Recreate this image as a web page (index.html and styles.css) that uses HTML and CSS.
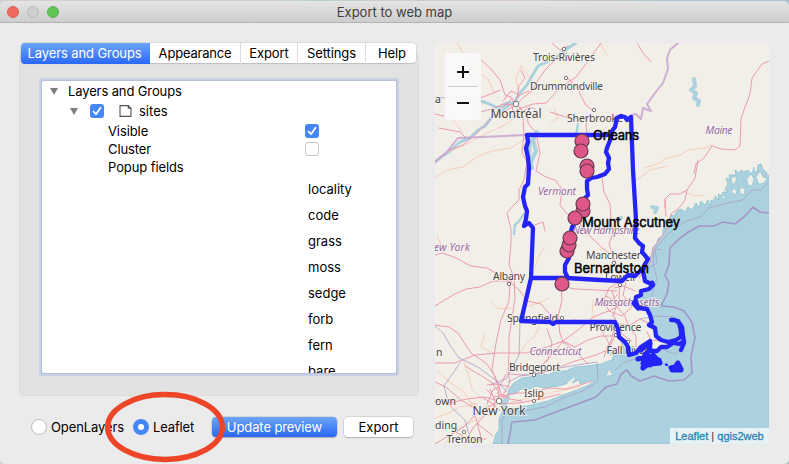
FILE: index.html
```html
<!DOCTYPE html>
<html lang="en">
<head>
<meta charset="utf-8">
<title>Export to web map</title>
<link rel="stylesheet" href="styles.css">
</head>
<body>
<div class="window">
  <header class="titlebar">
    <div class="lights"><i class="close"></i><i class="min"></i><i class="max"></i></div>
    <h1>Export to web map</h1>
  </header>
  <main class="content">
    <section class="left">
      <nav class="tabs">
        <span class="tab active">Layers and Groups</span>
        <span class="tab">Appearance</span>
        <span class="tab">Export</span>
        <span class="tab">Settings</span>
        <span class="tab help">Help</span>
      </nav>
      <div class="panel">
        <div class="tree">
          <div class="row root"><i class="arrow"></i><span>Layers and Groups</span></div>
          <div class="row layer"><i class="arrow"></i>
            <svg class="check" viewBox="0 0 14 14"><rect width="14" height="14" rx="3" fill="#4787f5"/><path d="M3.5 7.5 6 10.2 10.6 3.8" fill="none" stroke="#fff" stroke-width="1.8" stroke-linecap="round" stroke-linejoin="round"/></svg>
            <svg class="page" viewBox="0 0 13 12"><path d="M1 .6H9.300L12 3.300V11.400H1ZM9.300 .6V3.300H12" fill="#fff" stroke="#555" stroke-width="1.1"/></svg>
            <span>sites</span></div>
          <div class="row prop"><span>Visible</span>
            <svg class="check" viewBox="0 0 14 14"><rect width="14" height="14" rx="3" fill="#4787f5"/><path d="M3.5 7.5 6 10.2 10.6 3.8" fill="none" stroke="#fff" stroke-width="1.8" stroke-linecap="round" stroke-linejoin="round"/></svg></div>
          <div class="row prop"><span>Cluster</span><i class="box"></i></div>
          <div class="row prop"><span>Popup fields</span></div>
          <ul class="fields">
            <li>locality</li><li>code</li><li>grass</li><li>moss</li><li>sedge</li><li>forb</li><li>fern</li><li>bare</li>
          </ul>
        </div>
      </div>
      <footer class="actions">
        <span class="radio"></span><label class="open">OpenLayers</label>
        <span class="radio on"></span><label class="leaf">Leaflet</label>
        <button class="btn primary">Update preview</button>
        <button class="btn">Export</button>
        <svg class="ring" viewBox="0 0 124 74"><ellipse cx="62" cy="37" rx="57.3" ry="32.4" fill="none" stroke="#ee4528" stroke-width="5.5"/></svg>
      </footer>
    </section>
    <section class="map">
      <svg class="tiles" viewBox="435 43 334 401">
        <rect x="435" y="43" width="334" height="401" fill="#f2efe9"/>
        <path class="sea" d="M769 176 765 171 763 169 761 164 758 165 757 172 753 171 751 174 748 170 744 172 741 170 739 173 735 170 736 175 729 175 730 180 726 178 728 184 725 189 728 192 723 192 721 196 718 194 719 200 715 196 716 202 711 200 710 206 708 200 705 205 701 201 699 208 696 203 692 210 688 207 685 212 681 209 677 211 674 216 671 215 669 221 666 220 666 227 663 229 663 235 658 239 656 245 653 247 652 254 648 260 647 267 644 271 646 281 653 283 651 288 642 292 636 297 635 305 646 309 651 318 650 325 655 331 657 338 668 341 680 337 678 325 671 321 681 323 684 340 680 346 664 347 654 352 650 343 641 351 634 355 629 349 625 350 622 342 620 355 614 354 612 360 601 364 587 366 575 367 566 371 556 371 548 375 539 373 530 377 522 378 514 383 509 389 508 394 515 394 521 389 530 389 536 386 544 388 558 386 566 384 570 379 574 375 576 378 572 383 579 380 580 384 588 381 595 380 589 385 577 390 560 396 548 401 532 405 516 408 504 409 501 414 499 420 499 430 496 434 493 444H769Z"/>
        <path d="M575 369 568 379 561 382 570 381 577 375ZM509 393 499 404 504 409 510 399Z" fill="#acd2df"/>
        <g class="river">
          <path d="M576 43 568 48 558 56 547 62 538 66 532 76 527 85 520 93 515 101 506 107 501 112 492 117 485 126 478 130 470 138 460 142 449 152 441 157 435 162M515 103 507 103 498 108 487 103 480 101" stroke-width="3"/>
          <path d="M537 132 533 140 536 151 532 160 527 169M530 140 529 155 532 168" stroke-width="4"/>
          <path d="M524 214 519 221 515 225 514 234M578 124 576 135" stroke-width="2.500"/>
          <path d="M694 79 695 86 691 90 696 93 694 98 699 101 698 105M652 207 657 208 655 212M616 220 621 218" stroke-width="4"/>
          <path d="M767 175 761 183 764 188 757 188 760 194 751 184 749 178 742 180 744 189 735 185 737 194 731 193 739 198 732 202M754 168 751 180 746 175 740 185M714 199 711 210 703 207 701 213 693 209 690 219 683 212 679 222 673 218 672 227" stroke-width="2"/>
        </g>
        <g class="islands"><path d="m756 177 4-6 3 6 4 1-3 5-5 1ZM747 179l4-5 3 5-2 7-4-1ZM740 188l5 0-1 7-4-2ZM731 178l5-2 0 5-3 4ZM733 188l4 3-2 4-3-3ZM722 196l3-1-1 5ZM606 376l3-7 4 6ZM610 355l2-7 2 5Z"/></g>
        <g class="minor">
          <path d="M457 43 463 53 471 58 476 71 488 79 494 92M435 161 450 151 469 143 485 134 505 125 521 113M435 178 447 170 463 167 477 157 492 151 511 148 525 139M453 120 463 133M519 95 516 77 521 66 531 79M585 134 600 133 606 127M644 168 660 163 666 158 680 155 688 150 705 148 712 145M554 108 558 118 551 123M635 181 650 170 668 166M682 191 695 196 704 195M600 43 607 55M535 268 539 256 544 248M529 306 541 302 549 298M438 371 451 383 464 392 472 406 490 416M464 362 469 377 472 389 480 397M435 418 447 414 460 407 477 404M445 444 455 430 470 423 490 412M469 401 482 408 496 405M512 402 533 397 558 391 580 387M485 333 481 347 495 354M593 300 592 316 602 331M541 321 535 336 525 345 518 356M437 236 443 249M491 303 499 309 511 308"/>
        </g>
        <g class="road">
          <path d="M552 43 560 50 568 46M563 50 561 56 553 62 545 70 538 80 532 91 524 97 517 104 507 110 493 117 478 132 463 145 446 152 435 162M601 43 588 61 576 77 561 87 546 103 533 104 516 110M567 77 578 89 585 104 593 111M588 116 586 125 587 133M516 105 503 104 492 109 480 112M516 105 511 97 505 95 500 80 491 69 481 60M516 105 519 86 525 78 521 70M500 109 508 103 512 98M503 101 511 91 520 95 529 91M516 105 524 111 529 107 535 109M480 98 491 94 500 90M512 106 514 116 523 117M520 107 523 119 524 135 522 153 527 162 524 180 519 190 519 200 513 206 507 213 511 229 511 243 509 265 513 275M527 112 528 123 536 133 540 153 536 171 546 177 555 180 562 189 560 205 567 214 574 216M550 112 569 118 586 119M435 114 444 116M439 128 460 132 466 138"/>
          <path d="M637 43 643 53 651 62M769 61 762 64 752 78 750 94 744 110 741 119 740 146 735 150 721 149 712 146 704 158 696 164 694 173M698 160 695 178 687 190 685 200 679 208 671 214 665 232 653 248 650 263 639 278M665 208 665 199 670 194 680 194 687 190M665 200 666 216M602 178 604 192 610 204 611 220 613 233 609 244 615 261 620 276 619 300 613 315M578 220 584 231 593 239 602 248 612 255M532 226 543 222 545 231M513 275 510 285 501 276 487 268 471 266 454 257 442 253 435 255M435 306 453 295 466 289 480 287 493 281 509 281 520 291 527 301 541 304 552 317 565 322M561 283 562 300 558 317 560 334 564 344M561 286 575 289 597 290 617 291M510 284 509 301 501 320 497 338 494 355 492 370 498 385 499 400M514 278 515 299 512 318 509 337 509 354 508 371 510 382 502 397M435 363 455 363 475 355 498 353 526 353 547 347 563 341 578 330 593 317 611 310 625 303 636 304M435 325 449 327 458 333 471 353 486 363 495 376 502 396M435 401 450 403 467 399 484 397 500 401M435 382 446 387 461 400 474 408 481 414M435 444 450 435 464 427 475 415 488 407 501 400M464 444 473 428 484 416 496 406M474 413 478 424 493 436M497 390 491 382 480 375 465 366M500 400 507 395 516 393 532 393 549 388 566 389 580 385 592 381M500 404 519 403 540 399 560 394M508 374 524 375 541 373 557 368 575 361 593 356 608 350 615 336 615 322M563 341 553 354 543 364 533 375M565 342 575 347 588 340 601 336 615 336M564 342 578 354 588 364M575 320 590 322 601 330 609 343 604 357M547 329 552 343 548 360 537 369"/>
          <path d="M619 282 609 288 604 300 609 311 622 316 633 306M614 288 624 286 635 291M606 296 616 302 627 299 636 304M612 291 617 307 625 316M626 282 623 295 631 306M600 304 609 304 618 294M613 315 618 324 630 325 640 319 648 323M615 324 612 338 608 350M625 316 629 327 636 336 636 347M647 332 651 340 668 341 679 337M615 326 623 335 632 341M487 385 498 384 510 387M487 390 494 397 507 395M487 404 493 390 500 386 506 374M481 397 492 403 500 411M493 410 495 401 490 389M497 393 510 399 522 401M477 423 481 437 477 444M456 432 469 440 486 439"/>
        </g>
        <g class="boundary">
          <path d="M678 43 670 50 667 58 668 69 663 83 655 93 647 104 651 111 648 110 643 108 641 119 636 114 632 115M435 162 446 153 458 138 526 135" stroke-width="2"/>
          <path d="M769 213 760 212 753 207 744 217 735 224 723 222 714 226 699 226 687 233 679 239 670 248 669 264 665 275 669 283 667 294 661 306 674 307 684 311 692 322 695 338 691 356 692 373 684 380 669 381 654 376 640 381 631 376 627 370 621 374 617 384 606 387 596 397 575 405 553 413 535 420 512 422 508 444" stroke="#a08cc4" stroke-width="1.600"/>
          <path d="M520 323 519 355 506 379 492 384M435 326 443 333 451 347 459 358 478 367 498 382 507 392M460 363 444 386 449 405 465 420 470 438M435 97 449 98 478 98M508 382 520 376 535 374 553 369 577 365 597 362 598 381 585 390 563 398 545 407 523 411 507 411 502 420 502 444M769 182 761 190 752 190 743 200 728 203 709 208 700 217 684 222 669 233 654 250 653 265 657 278 650 303M640 319 656 316 674 317M615 370 625 362 639 358 649 365M664 350 675 354 680 350M647 269 657 263 655 249 661 250" stroke="#a99cca"/>
        </g>
        <g class="places" text-anchor="middle">
          <g fill="#fff" stroke="#777"><circle cx="564" cy="49" r="1.700"/><circle cx="566" cy="78" r="1.700"/><circle cx="594" cy="110" r="1.700"/><circle cx="516" cy="104" r="2.700"/><circle cx="509" cy="284" r="1.700"/><circle cx="614" cy="263" r="1.700"/><circle cx="620" cy="285" r="1.700"/><circle cx="562" cy="318" r="1.700"/><circle cx="616" cy="335" r="1.700"/><circle cx="628" cy="342" r="1.700"/><circle cx="534" cy="375" r="1.700"/><circle cx="534" cy="401" r="1.700"/><circle cx="499" cy="401" r="2.700"/><circle cx="464" cy="432" r="1.700"/></g>
          <text x="564" y="61" textLength="62">Trois-Rivières</text>
          <text x="566.5" y="90" textLength="73">Drummondville</text>
          <text x="516" y="118" textLength="51" class="city">Montréal</text>
          <text x="595" y="121.500" textLength="56">Sherbrooke</text>
          <text x="438" y="102.500">a</text>
          <text x="509" y="280" textLength="32">Albany</text>
          <text x="613.500" y="259" textLength="55">Manchester</text>
          <text x="620" y="281" textLength="30">Lowell</text>
          <text x="532.500" y="321.500" textLength="51">Springfield</text>
          <text x="615.500" y="331" textLength="52">Providence</text>
          <text x="627.500" y="353.500" textLength="42">Fall River</text>
          <text x="534.500" y="371" textLength="51">Bridgeport</text>
          <text x="534" y="397" textLength="20">Islip</text>
          <text x="499" y="414.500" textLength="53" class="city">New York</text>
          <text x="464.500" y="443" textLength="36">Trenton</text>
          <text x="436" y="356" text-anchor="start">n</text>
          <text x="435" y="405" text-anchor="start">own</text>
          <text x="435" y="429" text-anchor="start">ding</text>
          <g class="state"><text x="719" y="134" textLength="27">Maine</text><text x="557" y="195" textLength="38">Vermont</text><text x="452" y="251" textLength="36">ew York</text><text x="606" y="234" textLength="67">New Hampshire</text><text x="627" y="306" textLength="65">Massachusetts</text><text x="555.500" y="354.500" textLength="52">Connecticut</text></g>
        </g>
        <g class="outline">
          <path d="M631 117 627 120 625 117 621 116 617 118 615 127 612 131 611 138 607 148 606 152 609 158 608 163 609 169 605 174 597 177 591 178 587 181 587 189 588 195 584 199 582 210 578 219 572 227 570 237 569 258 565 265 565 272 568 278M607 135 527 135 528 142 526 148 528 158 529 168 528 184 525 187 523 197 525 206 527 211 526 219 524 226 529 223 533 228 531 278 525 304 521 321 550 322 553 324 556 322 615 322 618 329 619 337 625 342 628 347 629 355 636 353 641 347 650 341 650 350 645 355 652 357 653 362M531 278 567 278 600 280 622 281 628 275 635 276 642 269M631 117 633 170 636 220 635 238 639 243 643 246 642 252 648 259 645 264 643 271 645 281 653 285 649 289 641 291 641 295 636 297 635 305 639 308 647 309 650 315 652 322 649 325 655 328 656 336 661 340 668 342 676 340 681 337 681 331 679 323 675 320 671 320M678 321 682 327 684 343 681 350M684 341 679 344 673 343 667 347 661 347 657 351 651 351"/>
          <path d="m634 303 4 5-2-5M652 283l0 2M650 325l1 0M641 350l5-5 4-2-1 8M638 359l7-2 5 3-3 5-4 3M643 363l7 2 9-5 1 3-9 1M645 354l-2 14M653 355l6 7M671 368l4-1 3-4 3 6-9 1 9 0" stroke-width="5"/>
          <path d="M666 364.500 667 365M670 367 671 367" stroke-width="2.500"/>
        </g>
        <g class="sites"><circle cx="583" cy="211" r="7"/><circle cx="582" cy="141" r="7"/><circle cx="581" cy="151" r="7"/><circle cx="587" cy="166" r="7"/><circle cx="587" cy="171" r="7"/><circle cx="583" cy="204" r="7"/><circle cx="575" cy="218" r="7"/><circle cx="567" cy="251" r="7"/><circle cx="569" cy="245" r="7"/><circle cx="570" cy="238" r="7"/><circle cx="562" cy="284" r="7"/></g>
        <g class="labels"><text x="593" y="140" textLength="46">Orleans</text><text x="582" y="227" textLength="98">Mount Ascutney</text><text x="574" y="273" textLength="75">Bernardston</text></g>
      </svg>
      <div class="zoom"><b class="plus"></b><b></b></div>
      <div class="credit"><a>Leaflet</a> | <a>qgis2web</a></div>
    </section>
  </main>
</div>
</body>
</html>
```

FILE: styles.css
```css
* { box-sizing: border-box; }
body { margin: 0; background: linear-gradient(90deg, #d5d0cb 0 28%, #b9cfd3 40%, #d8c9c6 65%, #a9c4ce 85%); font: 13px/18px Inter, "Liberation Sans", sans-serif; color: #000; overflow: hidden; }
.window { height: 463px; margin-top: 1px; background: #ebebeb; border-radius: 6px 6px 5px 5px; overflow: hidden; }
.titlebar { display: flex; align-items: center; height: 22px; padding-left: 7px; background: linear-gradient(#e4e4e4, #cdcdcd); border-bottom: 1px solid #b3b3b3; }
.lights { display: flex; gap: 8px; width: 52px; }
.lights i { width: 12px; height: 12px; border-radius: 50%; background: #ee6a5f; border: 1px solid #de5c51; }
.lights .min { background: #d0d0d0; border-color: #b9b9b9; }
.lights .max { background: #61c554; border-color: #58b34b; }
.titlebar h1 { flex: 1; margin: 0 59px 0 0; font-size: 13px; font-weight: 400; text-align: center; color: #404040; }
.content { display: flex; gap: 16px; padding: 20px 20px 0 19px; }
.left { width: 400px; }
.tabs { position: relative; display: grid; grid-template-columns: 129px 91px 57px 68px 49px; height: 20px; width: 395px; margin: 0 0 -10px 2px; background: #fff; border-radius: 4px; box-shadow: 0 0 0 .5px #c8c8c8, 0 1px 1px #b5b5b5; z-index: 1; }
.tab { text-align: center; line-height: 21px; border-right: 1px solid #ddd; white-space: nowrap; letter-spacing: -.1px; }
.tab:nth-child(2) { letter-spacing: -.2px; }
.tab.active { color: #fff; border: 0; padding-right: 2px; background: linear-gradient(#6da5f9, #2968f6); border-radius: 4px 0 0 4px; }
.tab.help { border: 0; padding-left: 3px; }
.panel { height: 343px; padding: 27px 0 0 22px; background: #e2e2e2; border: 1px solid #dcdcdc; border-radius: 4px; }
.tree { width: 354px; height: 292px; overflow: hidden; background: #fff; outline: 1px solid #b4c1d7; box-shadow: 0 0 0 3px #c7d1e3; border-radius: 1px; }
.row { display: flex; align-items: center; height: 18px; }
.arrow { width: 0; height: 0; border: 4.5px solid transparent; border-top: 7px solid #7d7d7d; border-bottom: 0; }
.root { padding-left: 8px; height: 20px; gap: 10px; letter-spacing: -.12px; }
.layer { padding-left: 28px; height: 20px; }
.check { width: 14px; height: 14px; }
.layer .check { margin-left: 12px; }
.page { width: 13px; height: 12px; margin: 0 7px 0 15px; }
.prop { position: relative; top: 1px; padding-left: 66px; letter-spacing: -.1px; }
.prop span { width: 197px; }
.box { width: 14px; height: 14px; border: 1px solid #c4c4c4; border-radius: 3px; background: #fff; }
.fields { list-style: none; margin: 1px 0 0; padding: 0 0 0 266px; }
.fields li { height: 26px; line-height: 26px; }
.actions { position: relative; display: flex; align-items: center; height: 22px; margin-top: 20px; padding-left: 12px; }
.radio { width: 16px; height: 16px; border: 1px solid #bdbdbd; border-radius: 50%; background: #fff; }
.radio.on { border: 5px solid #4787f5; }
.open { width: 82px; margin-left: 4px; letter-spacing: -.1px; }
.leaf { width: 59px; margin-left: 4px; letter-spacing: -.15px; }
.btn { position: relative; top: -.5px; font: inherit; width: 69px; height: 20px; margin-left: 7px; padding: 0; border: 0; border-radius: 4px; background: #fff; box-shadow: 0 0 0 .5px #c0c0c0, 0 1px 1px #aaa; white-space: nowrap; }
.primary { width: 125px; margin-left: 0; color: #fff; background: linear-gradient(#6da5f9, #2968f6); letter-spacing: -.1px; }
.ring { position: absolute; left: 84px; top: -26px; width: 124px; height: 74px; }
.map { position: relative; width: 334px; height: 401px; overflow: hidden; }
.tiles { display: block; width: 334px; height: 401px; }
.tiles path { fill: none; stroke-linejoin: round; stroke-linecap: round; }
.tiles .sea { fill: #acd2df; stroke: #8cc2d1; stroke-width: .8; }
.tiles .sea + path { fill: #acd2df; }
.river path { stroke: #acd2df; }
.tiles .islands path { fill: #f2efe9; stroke: #8cc2d1; stroke-width: .6; }
.minor path { stroke: #f6c9b5; stroke-width: .9; }
.road path { stroke: #eb9bab; stroke-width: 1; }
.boundary { stroke: #c7a4d2; stroke-width: .9; opacity: .85; }
.places text { font: 10.5px "Noto Sans", sans-serif; fill: #444; stroke: #f8f6f2; stroke-width: 2px; paint-order: stroke; stroke-opacity: .7; }
.places .city { font-size: 12px; }
.places .state text { font-style: italic; font-size: 10.5px; fill: #95699f; }
.outline { stroke: #2424f8; stroke-width: 4.3; }
.sites circle { fill: #df5789; stroke: #653850; stroke-width: 1.2; }
.labels text { font: 13px Inter, sans-serif; stroke: #000; stroke-width: .45px; }
.zoom { position: absolute; left: 10px; top: 10px; width: 36px; height: 67px; padding: 3px; border-radius: 4px; background: rgba(250,250,250,.9); }
.zoom b { position: relative; display: block; height: 30px; }
.zoom .plus { height: 31px; border-bottom: 1px solid #ccc; }
.zoom b::after, .zoom .plus::before { content: ""; position: absolute; left: 9px; top: 15px; width: 12px; height: 2px; background: #111; }
.zoom .plus::before { left: 14px; top: 10px; width: 2px; height: 12px; }
.credit { position: absolute; right: 0; bottom: 0; width: 99px; height: 16px; background: rgba(255,255,255,.7); font: 11px/16px "Liberation Sans", sans-serif; text-align: center; white-space: nowrap; color: #333; }
.credit a { color: #2785b1; -webkit-text-stroke: .3px #2785b1; }
```
